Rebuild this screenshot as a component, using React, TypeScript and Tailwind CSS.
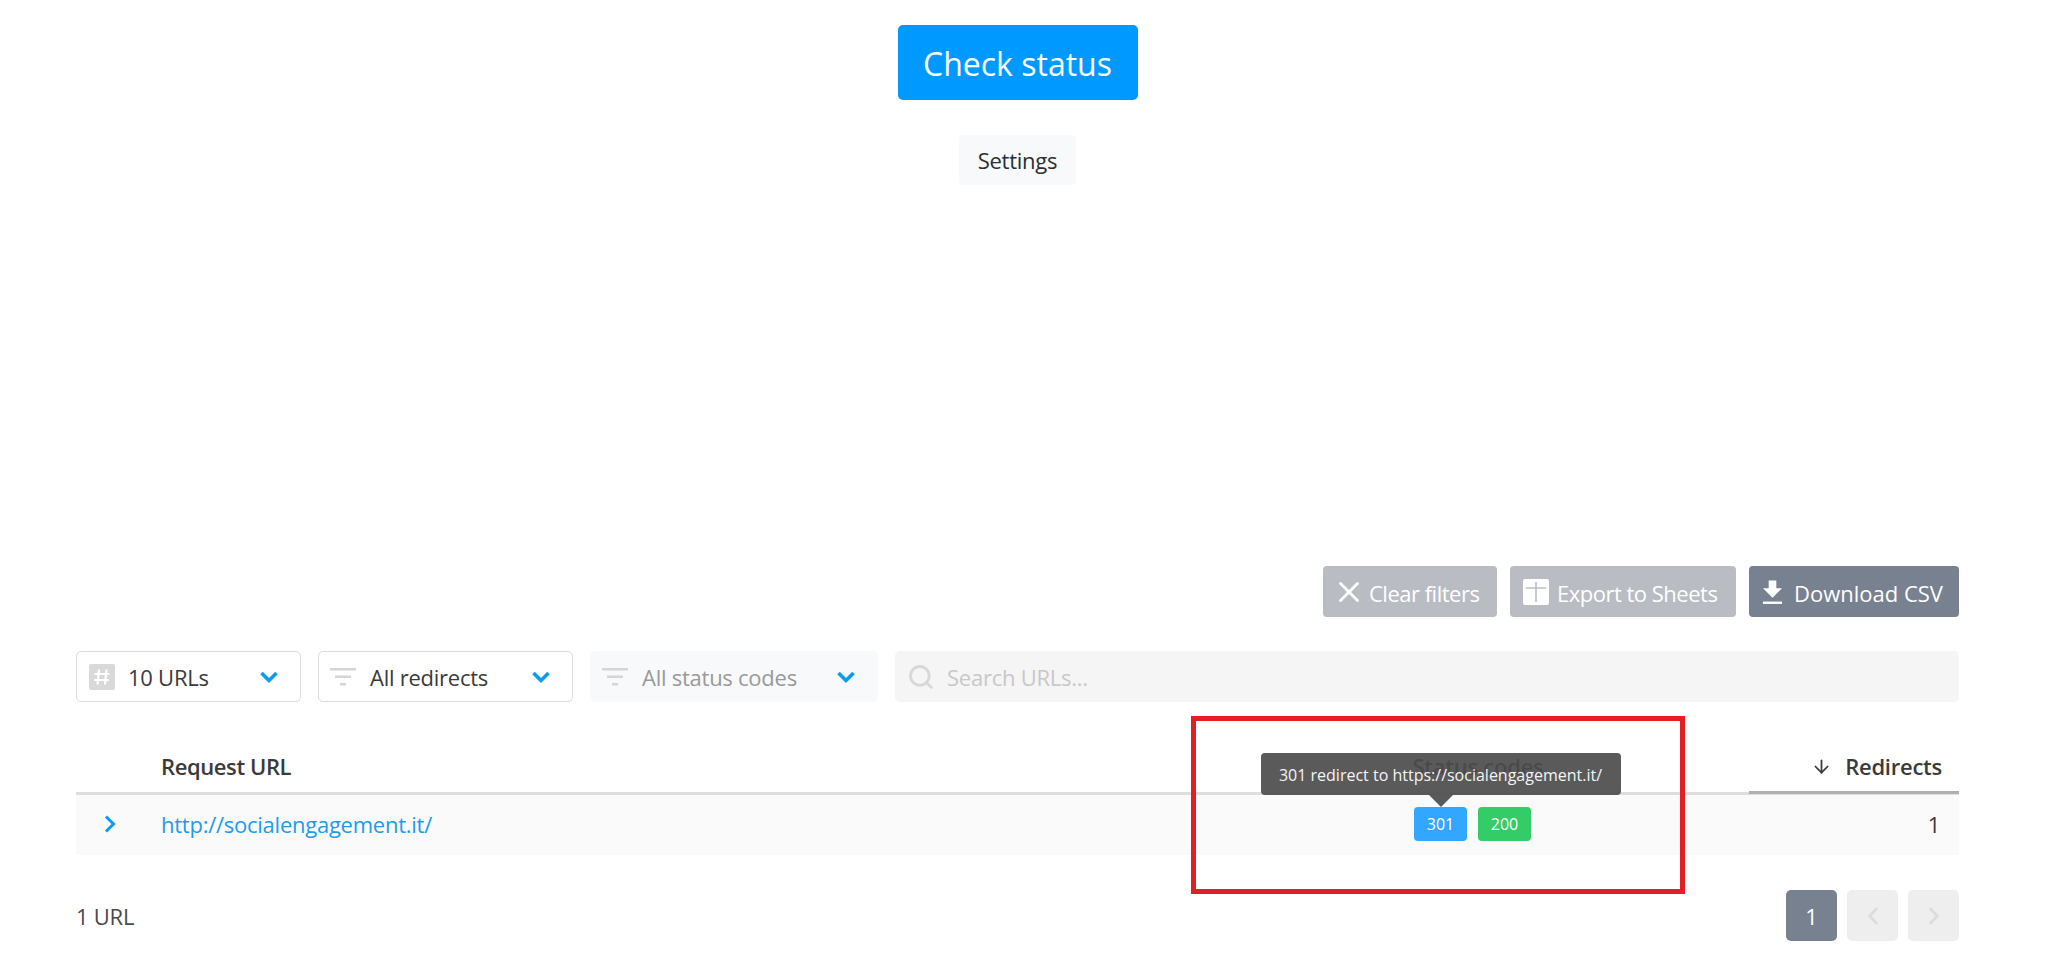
import { ArrowDown, ChevronLeft, ChevronRight, Search, X } from 'lucide-react';

function FilterIcon() {
    return (
        <svg width="26" height="20" viewBox="0 0 26 20" className="text-[#d5d5d5] shrink-0">
            <rect x="0" y="1" width="26" height="2.5" fill="currentColor" />
            <rect x="5" y="8.5" width="16" height="2.5" fill="currentColor" />
            <rect x="10" y="16" width="6" height="2.5" fill="currentColor" />
        </svg>
    );
}

function HashIcon() {
    return (
        <svg width="26" height="26" viewBox="0 0 26 26" className="shrink-0">
            <rect width="26" height="26" rx="2" fill="#d9d9d9" />
            <path d="M10 5.5 8.5 20.5M17.5 5.5 16 20.5M5.5 10h15M5 16h15" stroke="#fff" strokeWidth="2.2" fill="none" />
        </svg>
    );
}

function Caret() {
    return (
        <svg width="20" height="14" viewBox="0 0 20 14" className="shrink-0">
            <path d="M2.5 3 10 10.5 17.5 3" stroke="#0b9bf5" strokeWidth="3.6" fill="none" />
        </svg>
    );
}

function SheetsIcon() {
    return (
        <svg width="26" height="26" viewBox="0 0 26 26" className="shrink-0 mr-[8px]">
            <rect width="26" height="26" rx="2" fill="#fff" />
            <path d="M3 9h20M13 3v20" stroke="#bbbec4" strokeWidth="1.6" fill="none" />
        </svg>
    );
}

function DownloadIcon() {
    return (
        <svg width="21" height="26" viewBox="0 0 22 26" className="shrink-0 mr-[11px]">
            <path d="M7 1h8v8h6L11 19 1 9h6z" fill="#fff" />
            <rect x="1" y="23" width="20" height="2.5" fill="#fff" />
        </svg>
    );
}

function ToolbarButton({ label, width, dark, icon }: { label: string; width: string; dark?: boolean; icon: React.ReactNode }) {
    return (
        <button className={`flex items-center h-[51px] pl-[13px] rounded-[4px] text-[22px] text-white whitespace-nowrap ${width} ${dark ? 'bg-[#78818f] tracking-normal' : 'bg-[#b9bcc3] tracking-[-0.5px]'}`}>
            {icon}
            <span className="pt-[3px]">{label}</span>
        </button>
    );
}

export default function App() {
    return (
        <div className="bg-white min-h-[967px] font-['Open_Sans','Noto_Sans',sans-serif] text-[#3a3a3a] tracking-[-0.25px]">
            <div className="ml-[76px] w-[1883px] pt-[25px] relative">
                <div className="flex justify-center">
                    <button className="w-[240px] h-[75px] pt-[3px] rounded-[5px] bg-[#0099ff] text-white text-[32px] tracking-normal">
                        Check status
                    </button>
                </div>
                <div className="flex justify-center mt-[35px]">
                    <button className="w-[117px] h-[50px] pt-[1px] rounded-[4px] bg-[#f8f9fa] text-[22px] text-[#2b2f33]">
                        Settings
                    </button>
                </div>

                <div className="flex justify-end gap-[13px] mt-[381px]">
                    <ToolbarButton label="Clear filters" width="w-[174px]" icon={<X size={34} strokeWidth={2} className="mr-[3px] -ml-[4px]" />} />
                    <ToolbarButton label="Export to Sheets" width="w-[226px]" icon={<SheetsIcon />} />
                    <ToolbarButton label="Download CSV" width="w-[210px]" dark icon={<DownloadIcon />} />
                </div>

                <div className="flex gap-[17px] mt-[34px] h-[51px] text-[22px]">
                    <div className="w-[225px] flex items-center pl-[12px] pr-[21px] rounded-[5px] border border-[#dcdcdc]">
                        <HashIcon />
                        <span className="ml-[13px] flex-1 pt-[1px]">10 URLs</span>
                        <Caret />
                    </div>
                    <div className="w-[255px] flex items-center pl-[11px] pr-[21px] rounded-[5px] border border-[#dcdcdc]">
                        <FilterIcon />
                        <span className="ml-[14px] flex-1 pt-[1px]">All redirects</span>
                        <Caret />
                    </div>
                    <div className="w-[288px] flex items-center pl-[12px] pr-[22px] rounded-[5px] bg-[#f8f9fa] text-[#9a9a9a]">
                        <FilterIcon />
                        <span className="ml-[14px] flex-1 pt-[1px]">All status codes</span>
                        <Caret />
                    </div>
                    <div className="flex-1 flex items-center pl-[12px] rounded-[5px] bg-[#f5f5f5] text-[#c8c8c8]">
                        <Search size={28} strokeWidth={2.4} className="text-[#d8d8d8]" />
                        <span className="ml-[12px] pt-[1px]">Search URLs...</span>
                    </div>
                </div>

                <div className="relative mt-[15px]">
                    <div className="flex h-[78px] items-center text-[22px] font-semibold border-b-[3px] border-[#dedede]">
                        <div className="w-[85px]" />
                        <div className="w-[1046px] pt-[23px] tracking-[-0.4px]">Request URL</div>
                        <div className="w-[542px] text-center pt-[23px]">Status codes</div>
                        <div className="flex-1 flex items-center justify-end h-full pt-[23px] pr-[17px] gap-[13px] border-b-[3px] border-[#b0b0b0] mb-[-3px]">
                            <ArrowDown size={21} strokeWidth={2} />
                            Redirects
                        </div>
                    </div>
                    <div className="flex h-[60px] pb-[2px] items-center text-[22px] bg-[#fafafa]">
                        <div className="w-[85px] pl-[27px]">
                            <svg width="14" height="20" viewBox="0 0 14 20" className="block">
                                <path d="M3 2.5 10.5 10 3 17.5" stroke="#0b9bf5" strokeWidth="3" fill="none" />
                            </svg>
                        </div>
                        <div className="w-[1046px] text-[#1f9bec]">http://socialengagement.it/</div>
                        <div className="w-[542px] flex justify-center tracking-normal">
                            <div className="relative w-[53px] h-[34px] mr-[11px] rounded-[4px] bg-[#33a6ff] text-white text-[16px] flex items-center justify-center">
                                301
                                <div className="absolute bottom-[46px] left-1/2 -translate-x-1/2 w-[360px] h-[42px] pt-[1px] rounded-[4px] bg-[#4c4c4c]/92 text-[#f4f4f4] text-[16px] flex items-center justify-center whitespace-nowrap">
                                    301 redirect to https://socialengagement.it/
                                </div>
                                <div className="absolute bottom-[34px] left-1/2 -translate-x-1/2 w-0 h-0 border-x-[12px] border-x-transparent border-t-[12px] border-t-[#5a5a5a]" />
                            </div>
                            <div className="w-[53px] h-[34px] mr-[11px] rounded-[4px] bg-[#33cc66] text-white text-[16px] flex items-center justify-center">
                                200
                            </div>
                        </div>
                        <div className="flex-1 text-right pr-[19px]">1</div>
                    </div>
                    <div className="absolute left-[1115px] top-[-1px] w-[494px] h-[178px] border-[5px] border-[#e31e24] pointer-events-none" />
                </div>

                <div className="flex items-center justify-between mt-[35px]">
                    <div className="text-[22px] text-[#4a4a4a] pt-[1px]">1 URL</div>
                    <div className="flex gap-[10px]">
                        <div className="w-[51px] h-[51px] pt-[2px] rounded-[5px] bg-[#78818f] text-white text-[22px] flex items-center justify-center">1</div>
                        <div className="w-[51px] h-[51px] rounded-[5px] bg-[#eeeeee] text-[#dcdcdc] flex items-center justify-center">
                            <ChevronLeft size={28} strokeWidth={2.4} />
                        </div>
                        <div className="w-[51px] h-[51px] rounded-[5px] bg-[#eeeeee] text-[#dcdcdc] flex items-center justify-center">
                            <ChevronRight size={28} strokeWidth={2.4} />
                        </div>
                    </div>
                </div>
            </div>
        </div>
    );
}
